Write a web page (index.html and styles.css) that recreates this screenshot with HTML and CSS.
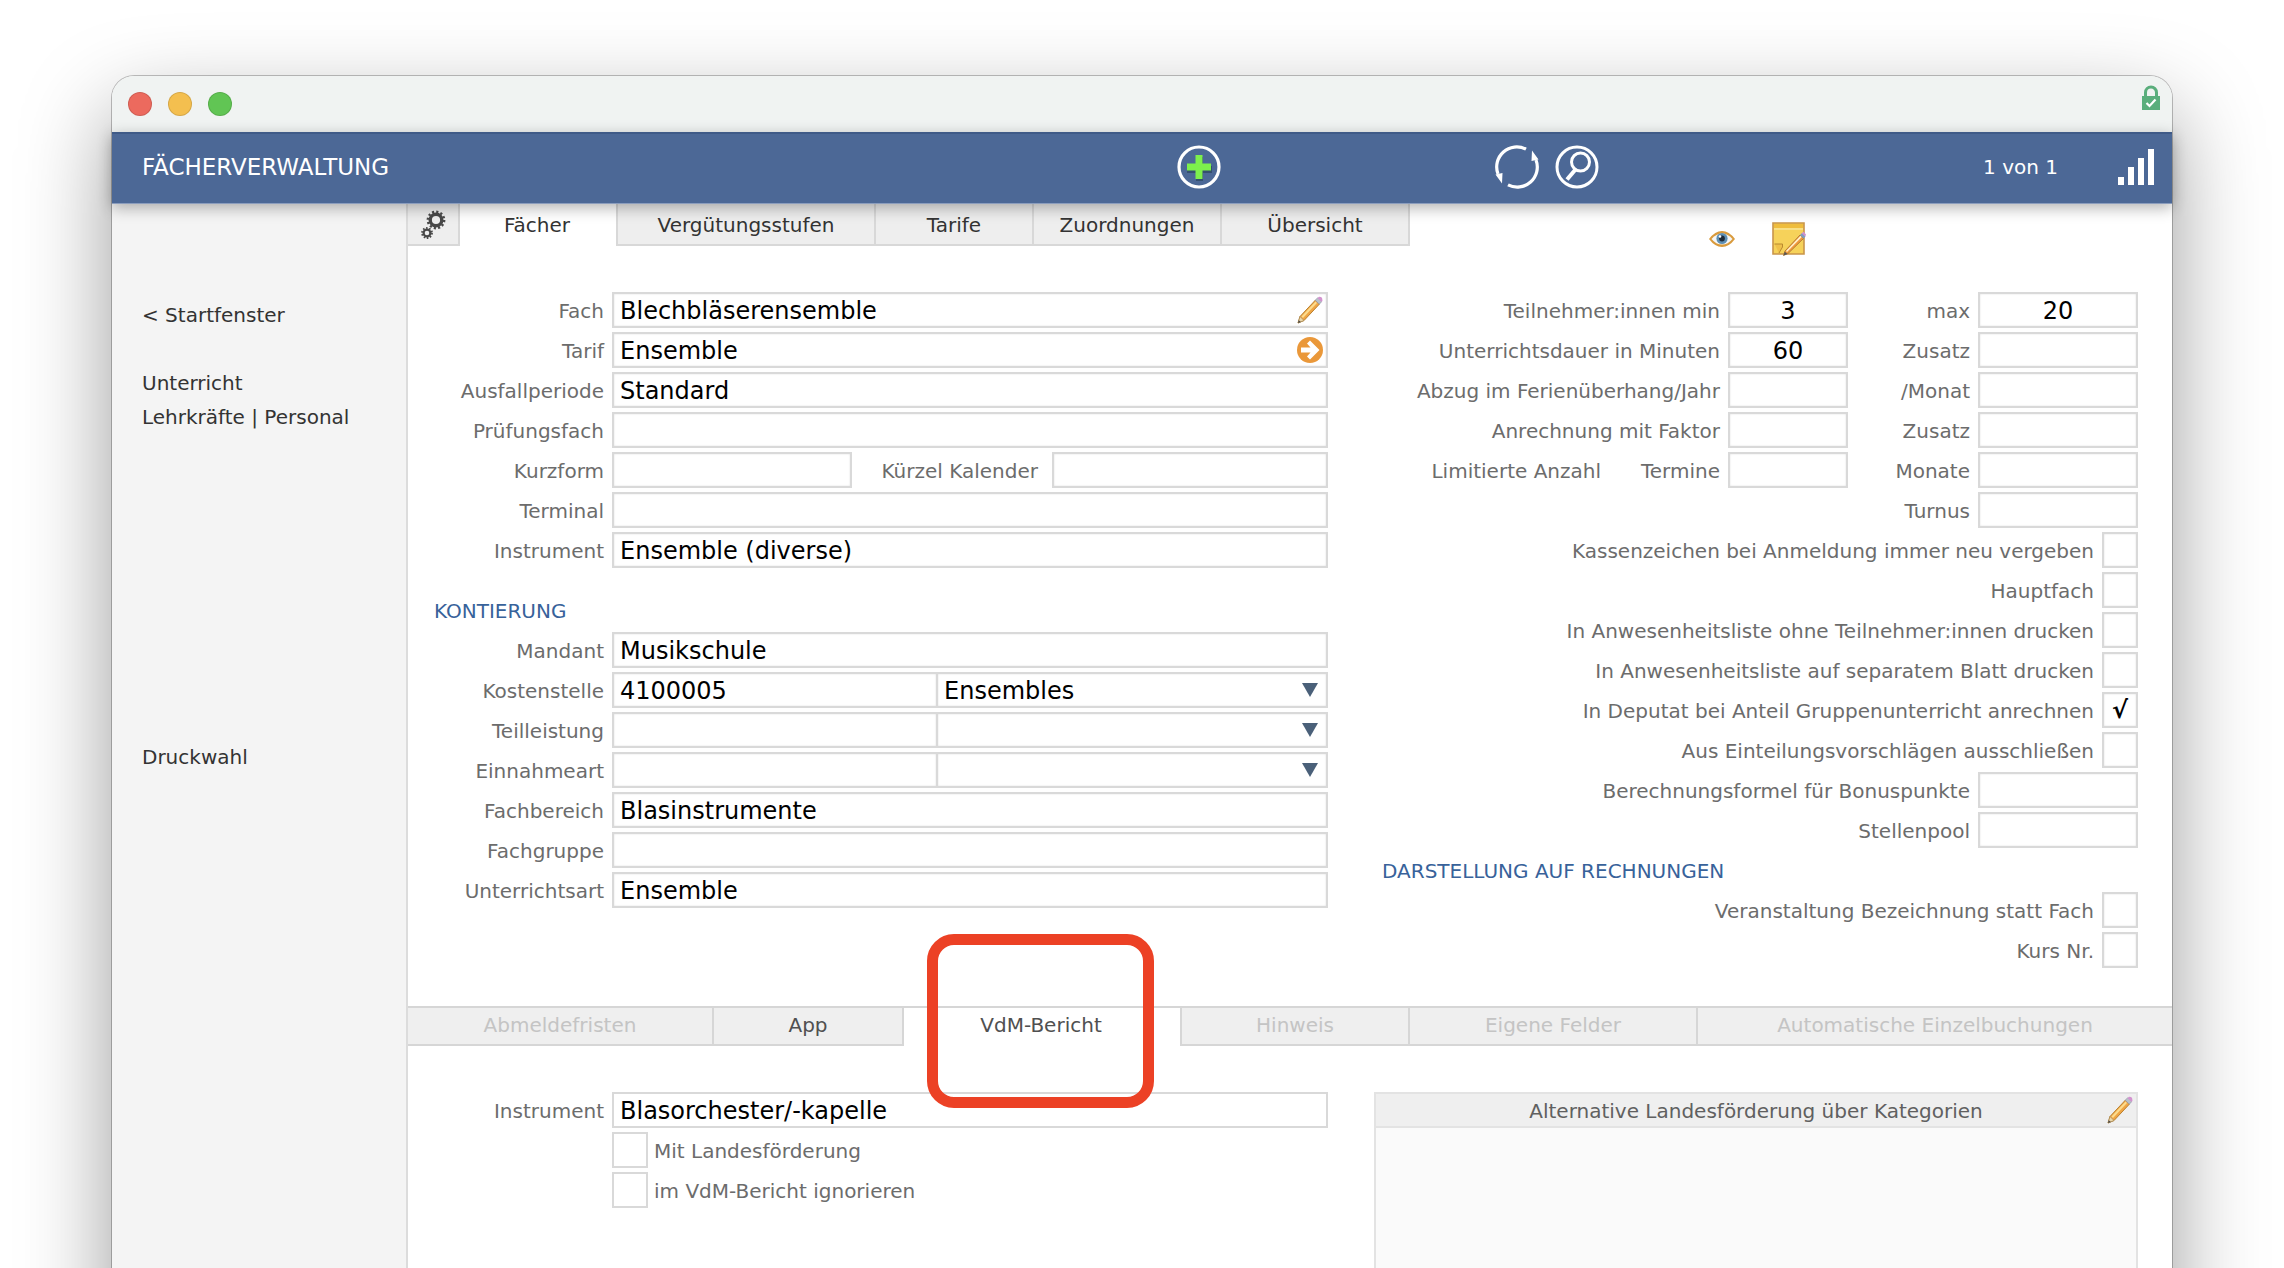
FILE: index.html
```html
<!DOCTYPE html>
<html lang="de">
<head>
<meta charset="utf-8">
<title>Fächerverwaltung</title>
<link rel="stylesheet" href="styles.css">
</head>
<body>
<svg class="defs" aria-hidden="true">
  <symbol id="pencil" viewBox="0 0 26 28">
    <path d="M1 27 3 20.500 18.500 4 22.500 8 7 24.500Z" fill="#f0a545" stroke="#b9812f" stroke-width="1"/>
    <path d="M4.500 20.500 18.500 5.500 20 7 6 22Z" fill="#fbdc8e"/>
    <path d="M1 27 3 20.500 7 24.500Z" fill="#ecd6a8" stroke="#9a8050" stroke-width=".6"/>
    <path d="M1 27 1.800 24.200 3.800 26Z" fill="#444"/>
    <path d="M18.200 4.200 20.700 1.700 24.700 5.700 22.300 8.200Z" fill="#b8bfc9" stroke="#8b93a0" stroke-width=".6"/>
    <path d="M20.500 2 22 .8Q25.500 .5 25.400 4.200L24.400 6Z" fill="#d394cf"/>
  </symbol>
</svg>
<div class="desktop">
  <div class="window">
    <div class="titlebar">
      <div class="lights">
        <button class="light light-close" aria-label="Schließen"></button>
        <button class="light light-min" aria-label="Minimieren"></button>
        <button class="light light-max" aria-label="Vergrößern"></button>
      </div>
      <svg class="lock" width="18" height="25" viewBox="0 0 18 25">
        <path d="M3.500 12V7.500a5.500 5.500 0 0 1 11 0V12" fill="none" stroke="#5aae7c" stroke-width="3"/>
        <path d="M0 11H18V25H0Z" fill="#5aae7c"/>
        <path d="M4.500 18 7.500 21 13.500 14.500" fill="none" stroke="#fff" stroke-width="2.200"/>
      </svg>
    </div>

    <header class="header">
      <h1 class="header-title">FÄCHERVERWALTUNG</h1>
      <button class="header-btn btn-add" aria-label="Neu">
        <svg width="44" height="44" viewBox="0 0 44 44">
          <circle cx="22" cy="22" r="20" fill="none" stroke="#fff" stroke-width="3.200"/>
          <path d="M19 12h7v9h9v7h-9v8h-7v-8h-9v-7h9Z" fill="#35506f"/>
          <path d="M18.500 10h7v8.500H34v7h-8.500V34h-7v-8.500H10v-7h8.500Z" fill="#7df04c"/>
        </svg>
      </button>
      <button class="header-btn" aria-label="Aktualisieren">
        <svg width="44" height="44" viewBox="0 0 44 44">
          <path d="M31 4.200A20 20 0 0 0 3 29M13 39.800A20 20 0 0 0 41 15" fill="none" stroke="#fff" stroke-width="3.200"/>
          <path d="M37 5.500 43.500 14.500 36.500 16Z M7 38.500.5 29.500 7.500 28Z" fill="#fff"/>
        </svg>
      </button>
      <button class="header-btn" aria-label="Suchen">
        <svg width="44" height="44" viewBox="0 0 44 44">
          <circle cx="22" cy="22" r="20" fill="none" stroke="#fff" stroke-width="3"/>
          <circle cx="25.500" cy="17" r="9" fill="none" stroke="#fff" stroke-width="3"/>
          <path d="M20.500 24.500 12 34.500" stroke="#fff" stroke-width="4"/>
        </svg>
      </button>
      <span class="header-count">1 von 1</span>
      <svg class="header-bars" width="36" height="36" viewBox="0 0 36 36">
        <path d="M0 28h6v8H0Z M10 18h6v18h-6Z M20 9h6v27h-6Z M30 0h6v36h-6Z" fill="#fff"/>
      </svg>
    </header>

    <div class="body">
      <nav class="sidebar">
        <div class="side-group"><a href="#">&lt; Startfenster</a></div>
        <div class="side-group side-modules">
          <a href="#">Unterricht</a>
          <span><a href="#">Lehrkräfte</a> | <a href="#">Personal</a></span>
        </div>
        <div class="side-group"><a href="#">Druckwahl</a></div>
      </nav>

      <main class="main">
        <div class="topbar">
          <button class="tab tab-gear" aria-label="Einstellungen">
            <svg width="26" height="30" viewBox="0 0 26 30" fill="none" stroke="#484848">
              <circle cx="16" cy="10" r="5.800" stroke-width="3.400"/>
              <circle cx="16" cy="10" r="8.200" stroke-width="2.400" stroke-dasharray="2.150 2.144"/>
              <circle cx="7" cy="23" r="3.400" stroke-width="2.200"/>
              <circle cx="7" cy="23" r="5" stroke-width="1.800" stroke-dasharray="1.570 1.572"/>
            </svg>
          </button>
          <button class="tab tab-main is-active">Fächer</button>
          <button class="tab tab-levels">Vergütungsstufen</button>
          <button class="tab tab-main">Tarife</button>
          <button class="tab tab-wide">Zuordnungen</button>
          <button class="tab tab-wide">Übersicht</button>
          <div class="tools">
            <button class="icon-btn" aria-label="Ansicht">
              <svg width="28" height="20" viewBox="0 0 28 20">
                <path d="M1 10Q7 2 14 2T27 10Q21 18 14 18T1 10Z" fill="#d99a3c"/>
                <path d="M3.500 10Q8.500 4.500 14 4.500T24.500 10Q20 15.500 14 15.500T3.500 10Z" fill="#f4f6f7"/>
                <circle cx="14" cy="9.500" r="5.600" fill="#5d8fb4"/>
                <circle cx="14" cy="9.500" r="2.900" fill="#1e2b38"/>
                <circle cx="12" cy="7.500" r="1.300" fill="#fff"/>
              </svg>
            </button>
            <button class="icon-btn" aria-label="Notiz">
              <svg width="34" height="34" viewBox="0 0 34 34">
                <path d="M1 1H32V32H1Z" fill="#f6d25a" stroke="#c9954a" stroke-width="1.600"/>
                <path d="M2 2H31V6H2Z" fill="#efbd3d"/>
                <path d="M2 7H31" stroke="#fbe9a6" stroke-width="1.200"/>
                <path d="M2.500 22H10.500V25L7 31" fill="#efc04a" stroke="#b98a2f"/>
                <path d="M11.500 33.500 13 29 28 13 31.500 16.500 16 31.500Z" fill="#f0983c" stroke="#a6722e" stroke-width=".8"/>
                <path d="M14 29 28.500 13.800 29.700 15 15 30Z" fill="#fff3cf"/>
                <path d="M11.500 33.500 12.800 29.800 15.500 32Z" fill="#555"/>
                <path d="M28 13 30 11 33.500 14.500 31.500 16.500Z" fill="#7f9cc4"/>
                <path d="M29.800 11.200 31.500 9.800 34 12.500 33.300 14.500Z" fill="#cf8fd0"/>
              </svg>
            </button>
          </div>
        </div>

        <form class="columns">
          <section class="col">
            <div class="row"><label for="fach">Fach</label>
              <div class="box"><input id="fach" value="Blechbläserensemble"><button type="button" class="icon-btn" aria-label="Bearbeiten"><svg width="26" height="28"><use href="#pencil"/></svg></button></div></div>
            <div class="row"><label for="tarif">Tarif</label>
              <div class="box"><input id="tarif" value="Ensemble"><button type="button" class="icon-btn" aria-label="Zum Tarif">
                <svg width="26" height="26" viewBox="0 0 26 26"><circle cx="13" cy="13" r="13" fill="#ea983a"/><path d="M4 10.500h9.500L10 6.500 13 3.500 22.500 13 13 22.500 10 19.500 13.500 15.500H4Z" fill="#fff"/></svg></button></div></div>
            <div class="row"><label for="ausfall">Ausfallperiode</label><input class="box" id="ausfall" value="Standard"></div>
            <div class="row"><label for="pruefung">Prüfungsfach</label><input class="box" id="pruefung"></div>
            <div class="row row-short"><label for="kurz">Kurzform</label><input class="box" id="kurz"><label for="kuerzel">Kürzel Kalender</label><input class="box" id="kuerzel"></div>
            <div class="row"><label for="terminal">Terminal</label><input class="box" id="terminal"></div>
            <div class="row"><label for="instr">Instrument</label><input class="box" id="instr" value="Ensemble (diverse)"></div>

            <h2 class="heading heading-accounts">KONTIERUNG</h2>
            <div class="row"><label for="mandant">Mandant</label><input class="box" id="mandant" value="Musikschule"></div>
            <div class="row"><label for="kst">Kostenstelle</label><div class="split"><input class="box" id="kst" value="4100005"><div class="pick"><select class="box" aria-label="Kostenstelle Name"><option>Ensembles</option></select></div></div></div>
            <div class="row"><label for="teil">Teilleistung</label><div class="split"><input class="box" id="teil"><div class="pick"><select class="box" aria-label="Teilleistung Name"><option></option></select></div></div></div>
            <div class="row"><label for="einn">Einnahmeart</label><div class="split"><input class="box" id="einn"><div class="pick"><select class="box" aria-label="Einnahmeart Name"><option></option></select></div></div></div>
            <div class="row"><label for="bereich">Fachbereich</label><input class="box" id="bereich" value="Blasinstrumente"></div>
            <div class="row"><label for="gruppe">Fachgruppe</label><input class="box" id="gruppe"></div>
            <div class="row"><label for="uart">Unterrichtsart</label><input class="box" id="uart" value="Ensemble"></div>
          </section>

          <section class="col">
            <div class="row row-pair"><label for="tmin">Teilnehmer:innen min</label><input class="box num" id="tmin" value="3"><label for="tmax">max</label><input class="box num" id="tmax" value="20"></div>
            <div class="row row-pair"><label for="dauer">Unterrichtsdauer in Minuten</label><input class="box num" id="dauer" value="60"><label for="zus1">Zusatz</label><input class="box num" id="zus1"></div>
            <div class="row row-pair"><label for="abzug">Abzug im Ferienüberhang/Jahr</label><input class="box num" id="abzug"><label for="monat">/Monat</label><input class="box num" id="monat"></div>
            <div class="row row-pair"><label for="faktor">Anrechnung mit Faktor</label><input class="box num" id="faktor"><label for="zus2">Zusatz</label><input class="box num" id="zus2"></div>
            <div class="row row-pair"><label class="limit" for="termine"><span>Limitierte Anzahl</span><span>Termine</span></label><input class="box num" id="termine"><label for="monate">Monate</label><input class="box num" id="monate"></div>
            <div class="row row-single"><label for="turnus">Turnus</label><input class="box num" id="turnus"></div>
            <div class="row row-check"><label for="c1">Kassenzeichen bei Anmeldung immer neu vergeben</label><input type="checkbox" id="c1"></div>
            <div class="row row-check"><label for="c2">Hauptfach</label><input type="checkbox" id="c2"></div>
            <div class="row row-check"><label for="c3">In Anwesenheitsliste ohne Teilnehmer:innen drucken</label><input type="checkbox" id="c3"></div>
            <div class="row row-check"><label for="c4">In Anwesenheitsliste auf separatem Blatt drucken</label><input type="checkbox" id="c4"></div>
            <div class="row row-check"><label for="c5">In Deputat bei Anteil Gruppenunterricht anrechnen</label><input type="checkbox" id="c5" checked></div>
            <div class="row row-check"><label for="c6">Aus Einteilungsvorschlägen ausschließen</label><input type="checkbox" id="c6"></div>
            <div class="row row-single"><label for="bonus">Berechnungsformel für Bonuspunkte</label><input class="box num" id="bonus"></div>
            <div class="row row-single"><label for="pool">Stellenpool</label><input class="box num" id="pool"></div>
            <h2 class="heading heading-bills">DARSTELLUNG AUF RECHNUNGEN</h2>
            <div class="row row-check"><label for="c7">Veranstaltung Bezeichnung statt Fach</label><input type="checkbox" id="c7"></div>
            <div class="row row-check"><label for="c8">Kurs Nr.</label><input type="checkbox" id="c8"></div>
          </section>
        </form>

        <div class="subtabs">
          <button class="subtab sub-notice" disabled>Abmeldefristen</button>
          <button class="subtab sub-app">App</button>
          <div class="sub-report">
            <button class="subtab is-active">VdM-Bericht</button>
            <span class="marker"></span>
          </div>
          <button class="subtab sub-hint" disabled>Hinweis</button>
          <button class="subtab sub-own" disabled>Eigene Felder</button>
          <button class="subtab sub-auto" disabled>Automatische Einzelbuchungen</button>
        </div>

        <form class="columns">
          <section class="col">
            <div class="row"><label for="vinstr">Instrument</label><input class="box flat" id="vinstr" value="Blasorchester/-kapelle"></div>
            <div class="row row-after"><input class="flat" type="checkbox" id="v1"><label for="v1">Mit Landesförderung</label></div>
            <div class="row row-after"><input class="flat" type="checkbox" id="v2"><label for="v2">im VdM-Bericht ignorieren</label></div>
          </section>
          <section class="panel">
            <div class="panel-head"><h3>Alternative Landesförderung über Kategorien</h3><button type="button" class="icon-btn" aria-label="Bearbeiten"><svg width="26" height="28"><use href="#pencil"/></svg></button></div>
          </section>
        </form>
      </main>
    </div>
  </div>
</div>
</body>
</html>
```
FILE: styles.css
```css
* { box-sizing: border-box; }

body {
  margin: 0;
  background: #fff;
  color: #333;
  font: 20px/24px "DejaVu Sans", Verdana, sans-serif;
}

h1, h2, h3 { margin: 0; font-weight: normal; }
a { color: inherit; text-decoration: none; }
svg { display: block; }

button, input, select {
  font: inherit;
  color: inherit;
  margin: 0;
  padding: 0;
  border: 0;
  border-radius: 0;
  background: none;
  outline: 0;
}

.defs { display: none; }

/* window frame */
.desktop {
  min-height: 100vh;
  padding: 76px 112px 0;
  overflow: clip;
}

.window {
  display: flex;
  flex-direction: column;
  min-height: calc(100vh + 44px);
  margin-bottom: -120px;
  border-radius: 22px 22px 0 0;
  background: #fff;
  box-shadow: 0 0 0 1px rgba(0, 0, 0, .24), 0 36px 90px rgba(0, 0, 0, .4);
}

.titlebar {
  display: flex;
  justify-content: space-between;
  height: 56px;
  padding: 9px 12px 0 16px;
  border-radius: 22px 22px 0 0;
  background: #f0f3f2;
}

.lights { display: flex; gap: 16px; padding-top: 7px; }

.light {
  width: 24px;
  height: 24px;
  border: 1px solid rgba(0, 0, 0, .12);
  border-radius: 50%;
}

.light-close { background: #ec6a5e; }
.light-min { background: #f4bf4f; }
.light-max { background: #61c554; }

.header {
  position: relative;
  z-index: 2;
  display: flex;
  align-items: center;
  height: 72px;
  padding: 0 18px 3px 30px;
  border-top: 2px solid #3f5a87;
  border-bottom: 1px solid #8b9dbd;
  background: #4c6896;
  color: #fff;
  box-shadow: 0 4px 14px rgba(0, 0, 0, .3);
}

.header-title { flex: 1; font-size: 23px; line-height: 28px; }
.header-btn { flex: none; width: 44px; height: 44px; margin-right: 16px; }
.btn-add { margin-right: 274px; }
.header-count { margin: 0 60px 0 368px; }

/* body */
.body { display: flex; flex: 1; }

.sidebar {
  flex: none;
  width: 296px;
  padding: 94px 0 0 30px;
  border-right: 2px solid #dcdcdc;
  background: #f4f4f4;
  line-height: 34px;
}

.side-group { display: flex; flex-direction: column; }
.side-modules { margin: 34px 0 306px; }

.main { flex: 1; min-width: 0; }

.topbar { display: flex; align-items: flex-start; min-height: 88px; }

.tab {
  height: 42px;
  padding-top: 2px;
  border: solid #d8d8d8;
  border-width: 0 2px 2px 0;
  background: #eee;
}

.tab-gear { display: grid; place-content: center; width: 52px; }
.tab-main { width: 158px; }
.tab-levels { width: 260px; border-left-width: 2px; }
.tab-wide { width: 188px; }
.tab.is-active { width: 156px; border-color: transparent; background: none; }

.tools { display: flex; align-items: center; gap: 36px; margin: 18px 0 0 298px; }
.icon-btn { flex: none; }

/* forms */
.columns {
  display: grid;
  grid-template-columns: minmax(0, 920fr) minmax(0, 764fr);
  gap: 46px;
  padding-right: 34px;
}

.col { display: flex; flex-direction: column; gap: 4px; }

.row {
  display: grid;
  grid-template-columns: 196px minmax(0, 1fr);
  gap: 8px;
  align-items: center;
  height: 36px;
  color: #6c6c6c;
  text-align: right;
  white-space: nowrap;
}

.row label { padding-top: 2px; }
.row-short { grid-template-columns: 196px 240px 1fr 276px; }
.row-short label + input + label { padding-right: 6px; }
.row-pair { grid-template-columns: 1fr 120px 114px 160px; }
.row-single { grid-template-columns: 1fr 160px; }
.row-check { grid-template-columns: 1fr 36px; }
.row-after { grid-template-columns: 36px 1fr; gap: 6px; padding-left: 204px; text-align: left; }
.limit { display: flex; justify-content: flex-end; gap: 40px; }

.box, input[type="checkbox"] {
  width: 100%;
  height: 36px;
  border: 2px solid #d9d9d9;
  background: #fff;
  color: #000;
  font-size: 24px;
  box-shadow: inset 0 0 2px rgba(0, 0, 0, .14);
}

.box { display: flex; align-items: center; padding: 2px 6px 0; }
div.box { padding: 0 3px 0 6px; }
.box input { flex: 1; min-width: 0; padding-top: 2px; }
.num { text-align: center; }
.box.flat, input.flat { box-shadow: none; }

input[type="checkbox"] {
  appearance: none;
  display: grid;
  place-content: center;
  width: 36px;
}

input[type="checkbox"]:checked::before { content: "√"; font-weight: bold; }

.split { display: grid; grid-template-columns: 324fr 392fr; }
.split > .box { border-right: 0; }
.pick { position: relative; }
.pick select { appearance: none; }

.pick::after {
  content: "";
  position: absolute;
  top: 11px;
  right: 10px;
  border: solid transparent;
  border-width: 14px 8px 0;
  border-top-color: #4a6079;
  pointer-events: none;
}

.heading { height: 36px; color: #38629a; font-size: 20px; line-height: 38px; }
.heading-accounts { margin-top: 20px; padding-left: 26px; }
.heading-bills { padding-left: 8px; }

/* lower tabs */
.subtabs {
  display: flex;
  height: 40px;
  margin: 38px 0 46px;
  border-top: 2px solid #d6d6d6;
}

.subtab {
  height: 38px;
  padding-bottom: 2px;
  border: solid #d6d6d6;
  border-width: 0 2px 2px 0;
  background: #efefef;
  color: #505050;
}

.subtab:disabled { color: #c4c4c4; }
.sub-notice { width: 306px; }
.sub-app { width: 190px; }
.sub-report { position: relative; width: 276px; }
.subtab.is-active { width: 100%; border-color: transparent; background: none; }
.sub-hint { width: 230px; border-left-width: 2px; }
.sub-own { width: 288px; }
.sub-auto { flex: 1; border-right: 0; }

/* highlight ring around the report tab */
.marker {
  position: absolute;
  z-index: 3;
  inset: -74px 26px -62px 23px;
  border: 11px solid #ec4125;
  border-radius: 27px;
  pointer-events: none;
}

.panel {
  min-height: 296px;
  border: 2px solid #e3e3e3;
  background: #fafafa;
  color: #606060;
}

.panel-head {
  display: flex;
  align-items: center;
  height: 34px;
  padding: 0 3px 0 29px;
  border-bottom: 2px solid #e3e3e3;
  background: #efefef;
}

.panel-head h3 { flex: 1; padding-top: 2px; font-size: 20px; text-align: center; }
```
